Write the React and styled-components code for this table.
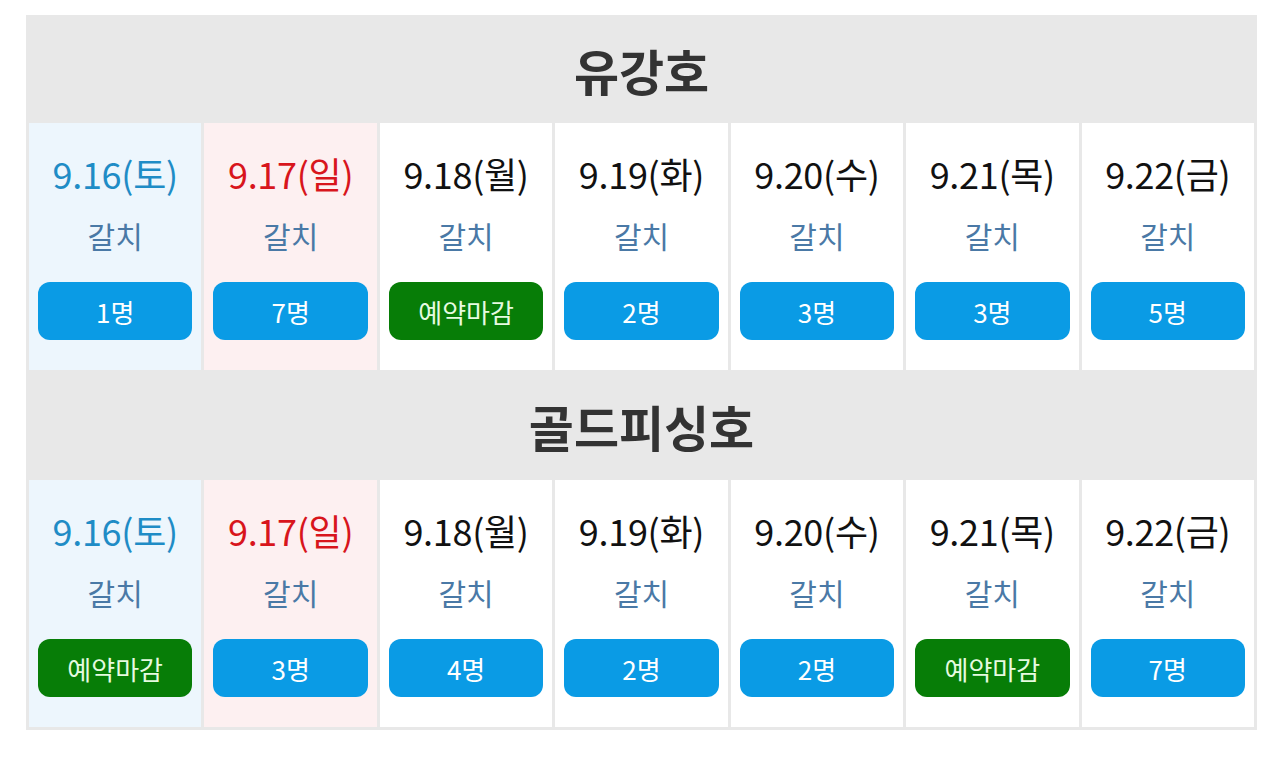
import React from "react";
import styled, { createGlobalStyle } from "styled-components";

const GlobalStyle = createGlobalStyle`
  body {
    margin: 0;
    background: #ffffff;
    font-family: "Noto Sans CJK KR", "Noto Sans", sans-serif;
  }
`;

const Page = styled.div`
  padding: 15px 23px 0 26px;
`;

const Board = styled.div`
  background-color: #e8e8e8;
  padding: 0 3px 3px;
  display: flex;
  flex-direction: column;
`;

const BoatTitle = styled.h2`
  margin: 0;
  height: ${(p) => (p.$first ? "108px" : "110px")};
  display: flex;
  align-items: center;
  justify-content: center;
  font-size: 49px;
  font-weight: 700;
  color: #333333;
`;

const DayRow = styled.div`
  display: grid;
  grid-template-columns: repeat(7, 1fr);
  gap: 3px;
  height: 247px;
`;

const DayCell = styled.div`
  background-color: ${(p) =>
    p.$kind === "sat" ? "#edf6fd" : p.$kind === "sun" ? "#fdf0f1" : "#ffffff"};
  display: flex;
  flex-direction: column;
  align-items: center;
  padding: 22px 9px 0;
`;

const DateLabel = styled.div`
  font-size: 36px;
  line-height: 56px;
  letter-spacing: -0.3px;
  color: ${(p) =>
    p.$kind === "sat" ? "#1f8cc6" : p.$kind === "sun" ? "#d8151c" : "#111111"};
`;

const FishLabel = styled.div`
  font-size: 30px;
  line-height: 44px;
  margin-top: 12px;
  color: #4a79a6;
`;

const SeatButton = styled.div`
  margin-top: 25px;
  width: 100%;
  height: 58px;
  border-radius: 12px;
  display: flex;
  align-items: center;
  justify-content: center;
  font-size: 26px;
  background-color: ${(p) => (p.$closed ? "#077d07" : "#0a9be5")};
  color: ${(p) => (p.$closed ? "#e6fbe0" : "#ffffff")};
`;

const days = [
  { date: "9.16(토)", kind: "sat" },
  { date: "9.17(일)", kind: "sun" },
  { date: "9.18(월)" },
  { date: "9.19(화)" },
  { date: "9.20(수)" },
  { date: "9.21(목)" },
  { date: "9.22(금)" },
];

const boats = [
  { name: "유강호", seats: ["1명", "7명", null, "2명", "3명", "3명", "5명"] },
  { name: "골드피싱호", seats: [null, "3명", "4명", "2명", "2명", null, "7명"] },
];

const App = () => {
  return (
    <Page>
      <GlobalStyle />
      <Board>
        {boats.map((boat, i) => (
          <React.Fragment key={boat.name}>
            <BoatTitle $first={i === 0}>{boat.name}</BoatTitle>
            <DayRow>
              {days.map((d, j) => (
                <DayCell key={d.date} $kind={d.kind}>
                  <DateLabel $kind={d.kind}>{d.date}</DateLabel>
                  <FishLabel>갈치</FishLabel>
                  <SeatButton $closed={!boat.seats[j]}>
                    {boat.seats[j] || "예약마감"}
                  </SeatButton>
                </DayCell>
              ))}
            </DayRow>
          </React.Fragment>
        ))}
      </Board>
    </Page>
  );
};

export default App;
